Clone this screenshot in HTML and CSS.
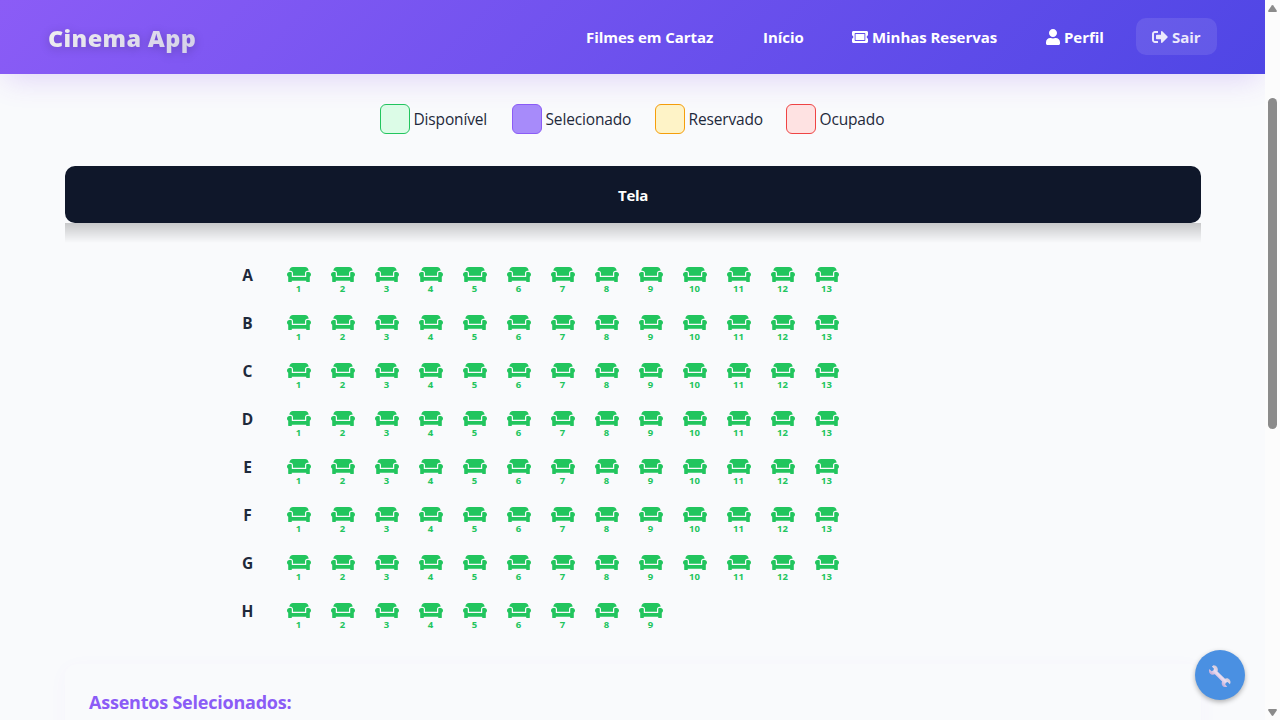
FILE: index.html
```html
<!DOCTYPE html>
<html lang="pt-BR">
<head>
<meta charset="utf-8">
<title>Cinema App</title>
<link rel="stylesheet" href="styles.css">
</head>
<body>
<svg class="sprite" aria-hidden="true">
  <symbol id="couch" viewBox="0 64 640 384" preserveAspectRatio="none"><path d="M160 224v64h320v-64c0-35.3 28.7-64 64-64h32c0-53-43-96-96-96H160c-53 0-96 43-96 96h32c35.3 0 64 28.7 64 64zm416-32h-32c-17.7 0-32 14.3-32 32v96H128v-96c0-17.7-14.3-32-32-32H64c-35.3 0-64 28.7-64 64 0 23.6 13 44 32 55.1V432c0 8.8 7.2 16 16 16h64c8.8 0 16-7.2 16-16v-16h384v16c0 8.8 7.2 16 16 16h64c8.8 0 16-7.2 16-16V311.1c19-11.1 32-31.5 32-55.1 0-35.3-28.7-64-64-64z"/></symbol>
</svg>
<div class="app">
  <div class="page">
    <header class="header">
      <div class="logo">Cinema App</div>
      <nav class="nav">
        <a class="nav-link"><span>Filmes em Cartaz</span></a>
        <a class="nav-link"><span>Início</span></a>
        <a class="nav-link"><svg class="icon ticket" viewBox="0 64 576 384" preserveAspectRatio="none"><path d="M128 160h320v192H128V160zm400 96c0 26.51 21.49 48 48 48v96c0 26.51-21.49 48-48 48H48c-26.51 0-48-21.49-48-48v-96c26.51 0 48-21.49 48-48s-21.49-48-48-48v-96c0-26.51 21.49-48 48-48h480c26.51 0 48 21.49 48 48v96c-26.51 0-48 21.49-48 48zm-48-104c0-13.255-10.745-24-24-24H120c-13.255 0-24 10.745-24 24v208c0 13.255 10.745 24 24 24h336c13.255 0 24-10.745 24-24V152z"/></svg><span>Minhas Reservas</span></a>
        <a class="nav-link profile"><svg class="icon user" viewBox="0 0 448 512"><path d="M224 256c70.7 0 128-57.3 128-128S294.7 0 224 0 96 57.3 96 128s57.3 128 128 128zm89.6 32h-16.7c-22.2 10.2-46.9 16-72.9 16s-50.6-5.8-72.9-16h-16.7C60.2 288 0 348.2 0 422.4V464c0 26.5 21.5 48 48 48h352c26.500 0 48-21.500 48-48v-41.6c0-74.2-60.2-134.4-134.4-134.4z"/></svg><span>Perfil</span></a>
        <a class="nav-link logout"><svg class="icon" viewBox="0 0 512 512"><path d="M497 273L329 441c-15 15-41 4.500-41-17v-96H152c-13.300 0-24-10.700-24-24v-96c0-13.300 10.700-24 24-24h136V88c0-21.400 25.900-32 41-17l168 168c9.300 9.400 9.300 24.600 0 34zM192 436v-40c0-6.600-5.400-12-12-12H96c-17.700 0-32-14.300-32-32V160c0-17.700 14.300-32 32-32h84c6.600 0 12-5.400 12-12V76c0-6.600-5.400-12-12-12H96c-53 0-96 43-96 96v192c0 53 43 96 96 96h84c6.600 0 12-5.400 12-12z"/></svg><span>Sair</span></a>
      </nav>
    </header>
    <main class="content">
      <div class="legend">
        <div class="legend-item"><i class="swatch free"></i><span>Disponível</span></div>
        <div class="legend-item"><i class="swatch selected"></i><span>Selecionado</span></div>
        <div class="legend-item"><i class="swatch reserved"></i><span>Reservado</span></div>
        <div class="legend-item"><i class="swatch taken"></i><span>Ocupado</span></div>
      </div>
      <div class="screen">Tela</div>
      <div class="screen-shade"></div>
      <div class="seats" id="seats"></div>
      <section class="summary"><h3>Assentos Selecionados:</h3></section>
    </main>
  </div>
  <div class="scrollbar">
    <svg class="arrow" viewBox="0 0 9 7"><path d="M4.500 0Q5 0 5.300.4L8.700 5.500Q9.300 7 8 7H1Q-.3 7 .3 5.500L3.700.4Q4 0 4.500 0z"/></svg>
    <div class="thumb"></div>
    <svg class="arrow down" viewBox="0 0 9 7"><path d="M4.500 0Q5 0 5.300.4L8.700 5.500Q9.300 7 8 7H1Q-.3 7 .3 5.500L3.700.4Q4 0 4.500 0z"/></svg>
  </div>
  <button class="tools" aria-label="Ferramentas">
    <svg viewBox="0 0 24 24" width="24" height="24">
      <defs><linearGradient id="metal" gradientUnits="userSpaceOnUse" x1="9" y1="15" x2="15" y2="9"><stop offset="0" stop-color="#c9b3dc"/><stop offset=".5" stop-color="#eadcf0"/><stop offset="1" stop-color="#d0c8d6"/></linearGradient></defs>
      <path fill="url(#metal)" d="M5.500 1.300 3.900 2.600 6 4.700 5.300 6.600 3.500 7.200 1.400 5.100C.3 7.200 1.200 9.700 3.300 10.500c1.300.5 2.600.3 3.500-.2l7.300 7.300c-.6 1.100-.6 2.700.2 3.900 1.200 1.700 3.300 2 4.900 1.200l-2-2.100.6-1.900 1.900-.7 2.200 2.200c1.300-2 .6-4.500-1.400-5.500-1.200-.6-2.500-.5-3.500.1L9.500 7.400c.5-1.200.5-2.700-.2-3.900C8.500 2 7 1.200 5.500 1.300z"/>
    </svg>
  </button>
</div>
<script src="script.js"></script>
</body>
</html>
```
FILE: styles.css
```css
* { box-sizing: border-box; }
body { margin: 0; height: 720px; overflow: hidden; background: #f9fafc; color: #1e293b; font-family: "Open Sans", "Noto Sans", sans-serif; font-size: 16px; }
.sprite { position: absolute; width: 0; height: 0; }
.app { position: relative; display: flex; height: 720px; }
.page { flex: 1; overflow: hidden; background: #f9fafc; }
.header { position: relative; display: flex; align-items: center; justify-content: space-between; height: 74px; padding: 0 48px 1px; background: linear-gradient(135deg, #8b5cf6, #4f46e5); box-shadow: 0 10px 30px -5px rgba(124, 58, 237, .2); }
.logo { font-size: 23.500px; font-weight: 800; line-height: 36px; padding-top: 2px; letter-spacing: .35px; white-space: nowrap; color: transparent; background: linear-gradient(135deg, #f0f0f0, #d3cfe8); background-clip: text; -webkit-background-clip: text; filter: drop-shadow(0 2px 5px rgba(0, 0, 0, .2)); }
.nav { display: grid; grid-template-columns: 161px 73px 177px 91px 81px; gap: 16px; }
.nav-link { display: flex; align-items: center; gap: 4px; height: 37px; padding: 0 0 0 16px; border-radius: 10px; color: #fff; font-weight: 700; font-size: 15px; letter-spacing: -.05px; white-space: nowrap; }
.nav-link.profile { padding-left: 17px; }
.nav-link.logout { background: rgba(255, 255, 255, .1); color: #ece9fc; }
.icon { fill: currentColor; flex: none; width: 16px; height: 16px; }
.ticket { height: 12px; }
.user { width: 14px; }
.content { padding: 30px 64px 0 65px; }
.legend { display: grid; grid-template-columns: 108px 119px 107px 99px; justify-content: center; gap: 24px; padding-right: 2px; }
.legend-item { display: flex; align-items: center; gap: 4px; font-size: 15.500px; letter-spacing: -.15px; white-space: nowrap; }
.swatch { flex: none; width: 30px; height: 30px; border: 1px solid; border-radius: 6px; }
.free { background: #dcfce7; border-color: #22c55e; }
.selected { background: #a78bfa; border-color: #8b5cf6; }
.reserved { background: #fef3c7; border-color: #f59e0b; }
.taken { background: #fee2e2; border-color: #ef4444; }
.screen { display: flex; align-items: center; justify-content: center; height: 57px; margin-top: 32px; padding-top: 1px; border-radius: 10px; background: #0f172a; color: #fff; font-weight: 700; font-size: 15px; letter-spacing: -.3px; }
.screen-shade { height: 20px; background: linear-gradient(rgba(0, 0, 0, .2), transparent); }
.seats { display: grid; gap: 8px; padding: 13px 0 0 168px; }
.row { display: grid; grid-template-columns: 40px repeat(13, 36px); column-gap: 8px; height: 40px; }
.row-name { padding-right: 11px; text-align: center; font-weight: 700; font-size: 15.500px; line-height: 38px; }
.seat { display: flex; flex-direction: column; align-items: center; padding-top: 11px; color: #22c55e; font-size: 9.500px; font-weight: 700; line-height: 13px; }
.seat svg { width: 24px; height: 15px; fill: currentColor; }
.seat span { padding-right: 1px; }
.summary { height: 120px; margin-top: 32px; padding: 24px; border-radius: 12px; background: #f9fafc; box-shadow: 0 4px 20px rgba(139, 92, 246, .035); }
.summary h3 { margin: 1px 0 0; color: #8b5cf6; font-size: 18px; line-height: 26px; font-weight: 700; letter-spacing: -.22px; white-space: nowrap; }
.scrollbar { display: flex; flex-direction: column; align-items: center; width: 15px; padding: 5px 0 4px; background: #fcfcfc; }
.arrow { width: 9px; height: 7px; fill: #8b8b8b; flex: none; }
.down { margin-top: auto; transform: rotate(180deg); }
.thumb { width: 9px; height: 331px; margin-top: 86px; border-radius: 5px; background: #8b8b8b; }
.tools { position: absolute; right: 35px; top: 650px; display: flex; align-items: center; justify-content: center; width: 50px; height: 50px; padding: 2px 0 0; border: 0; border-radius: 50%; background: #4a90e2; box-shadow: 0 2px 5px rgba(0, 0, 0, .3); }
```
FILE: script.js
```js
const seatCounts = { A: 13, B: 13, C: 13, D: 13, E: 13, F: 13, G: 13, H: 9 };
document.getElementById('seats').innerHTML = Object.entries(seatCounts).map(([name, count]) =>
  `<div class="row"><div class="row-name">${name}</div>${Array.from({ length: count }, (_, i) =>
    `<div class="seat"><svg><use href="#couch"/></svg><span>${i + 1}</span></div>`).join('')}</div>`
).join('');
```
